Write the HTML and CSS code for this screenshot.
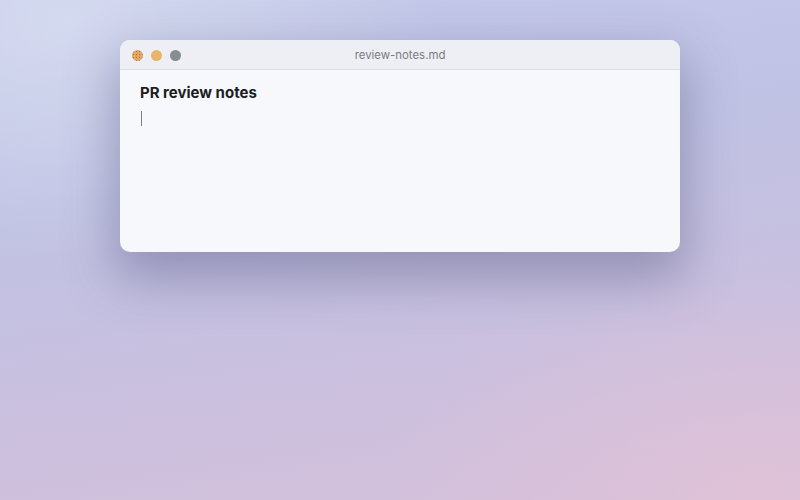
FILE: index.html
```html
<!DOCTYPE html>
<html lang="en">

<head>
    <meta charset="UTF-8">
    <meta name="viewport" content="width=device-width, initial-scale=1.0">
    <title>review-notes.md</title>
    <link rel="stylesheet" href="styles.css">
</head>

<body>
    <div class="window">
        <div class="titlebar">
            <div class="lights">
                <span class="light close"></span>
                <span class="light min"></span>
                <span class="light max"></span>
            </div>
            <div class="title">review-notes.md</div>
        </div>
        <div class="editor">
            <h1 class="heading">PR review notes</h1>
            <div class="line"><span class="caret"></span></div>
        </div>
    </div>
</body>

</html>
```

FILE: styles.css
```css
html,
body {
    height: 100%;
}

body {
    margin: 0;
    padding-top: 40px;
    box-sizing: border-box;
    font-family: Inter, "Noto Sans", sans-serif;
    background:
        radial-gradient(ellipse 380px 240px at 8% 4%, rgba(216, 222, 240, 0.8), rgba(216, 222, 240, 0) 100%),
        radial-gradient(ellipse 380px 220px at 95% 100%, rgba(226, 194, 214, 0.75), rgba(226, 194, 214, 0) 100%),
        linear-gradient(172deg, #c4c9ea 0%, #c0c2e4 35%, #c9c0df 65%, #d5c1db 100%);
}

.window {
    width: 560px;
    height: 212px;
    margin: 0 auto;
    border-radius: 10px;
    overflow: hidden;
    background: #f6f8fc;
    box-shadow: 0 22px 50px 6px rgba(90, 92, 130, 0.45);
    display: flex;
    flex-direction: column;
}

.titlebar {
    height: 30px;
    flex-shrink: 0;
    padding-top: 1px;
    box-sizing: border-box;
    background: #eeeff5;
    border-bottom: 1px solid #dedfe6;
    display: flex;
    align-items: center;
    position: relative;
}

.lights {
    display: flex;
    gap: 8px;
    padding-left: 12px;
}

.light {
    width: 11px;
    height: 11px;
    border-radius: 50%;
    display: block;
}

.close {
    background: #e3a664;
    background-image: radial-gradient(circle, rgba(120, 70, 20, 0.55) 0.6px, transparent 1px);
    background-size: 3px 3px;
}

.min {
    background: #e8b56c;
}

.max {
    background: #878e91;
}

.title {
    position: absolute;
    left: 0;
    right: 0;
    top: 8px;
    text-align: center;
    font-size: 11.4px;
    color: #7a7b80;
    pointer-events: none;
}

.editor {
    padding: 13px 20px;
}

.heading {
    margin: 0;
    font-size: 15px;
    font-weight: 700;
    color: #1c1d21;
    line-height: 20px;
}

.line {
    margin-top: 8px;
    height: 16px;
}

.caret {
    display: block;
    width: 1px;
    height: 15px;
    margin-left: 1px;
    background: #7d7f88;
}
```
